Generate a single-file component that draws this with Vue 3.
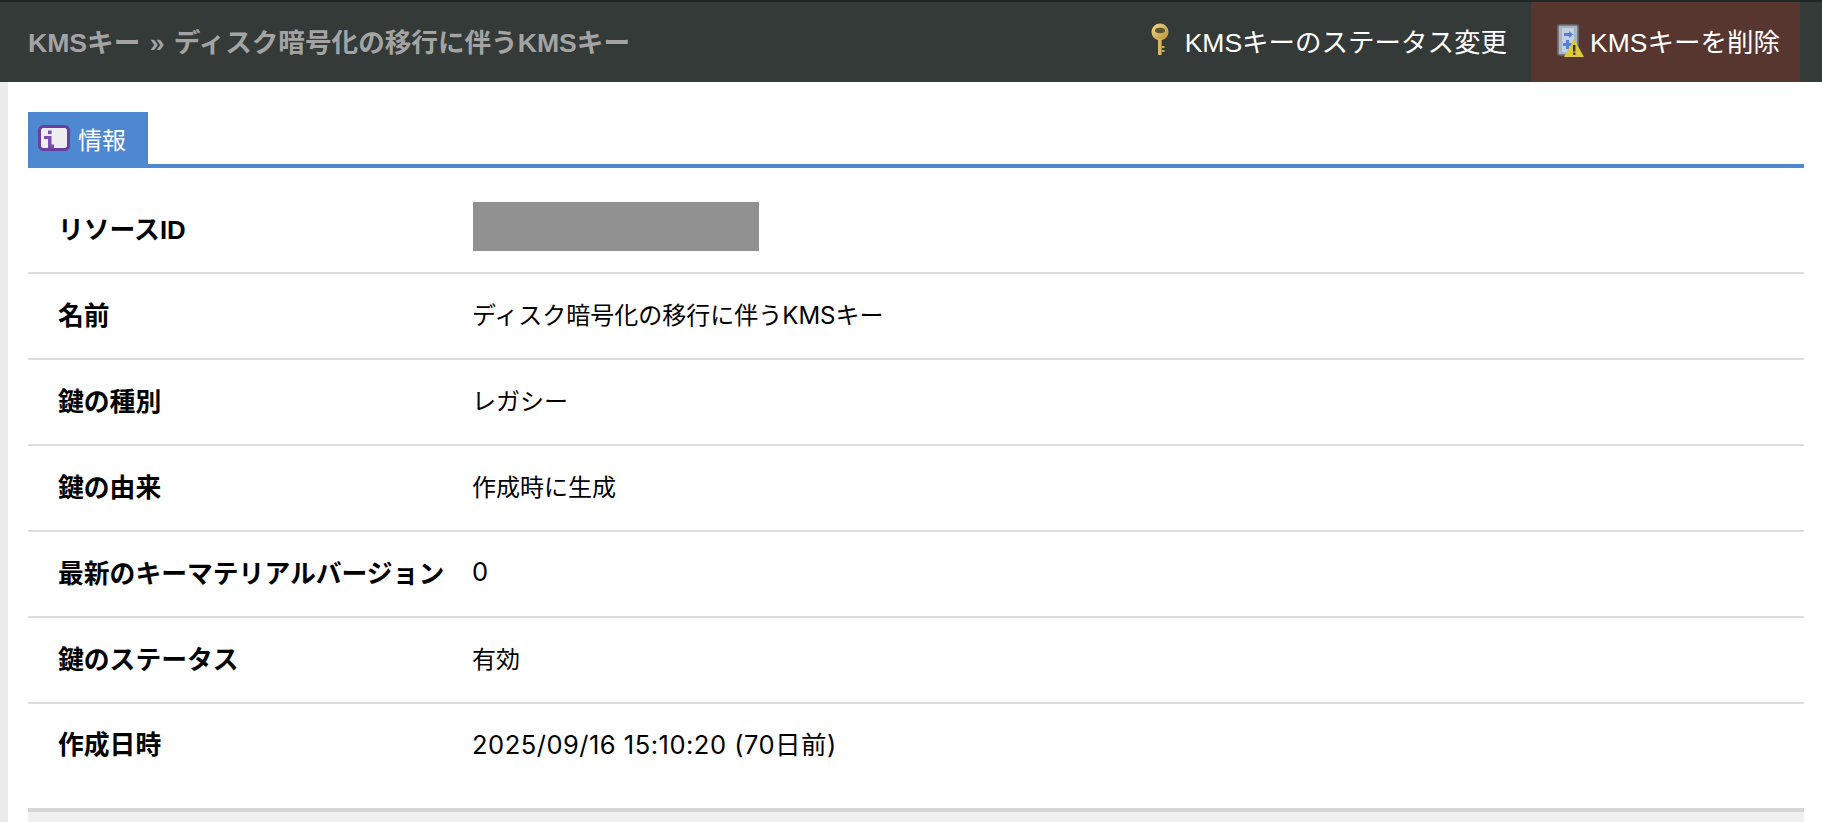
<script setup>
const rows = [
  { label: '名前', value: 'ディスク暗号化の移行に伴うKMSキー' },
  { label: '鍵の種別', value: 'レガシー' },
  { label: '鍵の由来', value: '作成時に生成' },
  { label: '最新のキーマテリアルバージョン', value: '0', wide: true },
  { label: '鍵のステータス', value: '有効' },
  { label: '作成日時', value: '2025/09/16 15:10:20 (70日前)', wide: true },
]
</script>

<template>
  <div class="page">
    <header class="topbar">
      <h1 class="title">KMSキー » ディスク暗号化の移行に伴うKMSキー</h1>
      <nav class="actions">
        <a class="action">
          <svg width="24" height="36" viewBox="0 0 24 36">
            <defs>
              <linearGradient id="gold" x1="0" y1="0" x2="1" y2="1">
                <stop offset="0" stop-color="#f0d98c" />
                <stop offset="1" stop-color="#b98f35" />
              </linearGradient>
            </defs>
            <filter id="soft"><feGaussianBlur stdDeviation="0.7" /></filter>
            <g filter="url(#soft)">
              <ellipse cx="12" cy="10" rx="8.5" ry="8.5" fill="url(#gold)" />
              <ellipse cx="12" cy="8.5" rx="5" ry="2.8" fill="#5c5632" />
              <rect x="10" y="17" width="3.6" height="16" fill="#d6b765" />
              <rect x="13.6" y="24" width="3" height="2" fill="#c9a64e" />
              <rect x="13.6" y="28" width="3" height="2" fill="#c9a64e" />
            </g>
          </svg>
          <span>KMSキーのステータス変更</span>
        </a>
        <a class="action danger">
          <svg width="28" height="36" viewBox="0 0 28 36">
            <filter id="soft2"><feGaussianBlur stdDeviation="0.6" /></filter>
            <g filter="url(#soft2)">
              <rect x="2" y="3" width="20" height="30" rx="1.5" fill="#a9b3c6" stroke="#6a6c72" stroke-width="1.5" />
              <rect x="6" y="6" width="12" height="24" fill="#c4cfe2" />
              <path d="M8 11h5v-2l4 3.5-4 3.5v-2H8z" fill="#4f7fe0" />
              <path d="M7 21h3v-3h3v3h3v3h-3v3h-3v-3H7z" fill="#4f7fe0" />
              <path d="M18 17L28 35H8z" fill="#dcc93c" />
              <rect x="17" y="23" width="2.4" height="6.5" fill="#3a3420" />
              <rect x="17" y="30.5" width="2.4" height="2.4" fill="#3a3420" />
            </g>
          </svg>
          <span>KMSキーを削除</span>
        </a>
      </nav>
    </header>

    <main class="content">
      <div class="tabs">
        <div class="tab">
          <svg width="32" height="26" viewBox="0 0 32 26">
            <filter id="soft3"><feGaussianBlur stdDeviation="0.7" /></filter>
            <g filter="url(#soft3)">
              <rect x="1.5" y="1.5" width="29" height="23" rx="4" fill="#eeeef0" stroke="#6a3f9e" stroke-width="3" />
              <rect x="10" y="5.5" width="3.6" height="3.6" fill="#7a4fb0" />
              <path d="M6 11h7.5v8.5H16V23H10V14H6z" fill="#7a4fb0" />
            </g>
          </svg>
          <span>情報</span>
        </div>
      </div>

      <section class="details">
        <div class="row first">
          <div class="label">リソースID</div>
          <div class="value"><div class="redacted"></div></div>
        </div>
        <div v-for="row in rows" :key="row.label" class="row">
          <div class="label">{{ row.label }}</div>
          <div class="value" :class="{ wide: row.wide }">{{ row.value }}</div>
        </div>
      </section>

      <div class="footer"></div>
    </main>
  </div>
</template>

<style>
html, body { margin: 0; background: #fff; }
</style>

<style scoped>
.page {
  width: 1822px;
  height: 822px;
  overflow: hidden;
  display: flex;
  flex-direction: column;
  font-family: "Liberation Sans", "Noto Sans CJK JP", sans-serif;
  color: #000;
  background: linear-gradient(90deg, #ebebeb 8px, #fff 8px);
}
.topbar {
  box-sizing: border-box;
  height: 82px;
  flex: none;
  border-top: 2px solid #1f2624;
  background: #333a38;
  display: flex;
  align-items: stretch;
  justify-content: space-between;
  padding: 0 22px 0 28px;
}
.title {
  margin: 0;
  align-self: center;
  padding-bottom: 4px;
  font-size: 26.6px;
  font-weight: 700;
  word-spacing: 2px;
  color: #a3a3a3;
}
.actions { display: flex; }
.action {
  display: flex;
  align-items: center;
  gap: 13px;
  color: #fff;
  font-size: 26.5px;
  padding: 0 24px 4px 0;
}
.action svg { flex: none; }
.danger {
  background: #573630;
  gap: 6px;
  padding: 0 20px 4px 25px;
}
.content {
  flex: 1;
  margin-left: 8px;
  padding: 30px 18px 0 20px;
  display: flex;
  flex-direction: column;
  background: #fff;
}
.tabs {
  border-bottom: 4px solid #4d88d0;
  height: 52px;
  flex: none;
}
.tab {
  width: 120px;
  height: 52px;
  box-sizing: border-box;
  background: #4d88d0;
  color: #fff;
  font-size: 24px;
  display: flex;
  align-items: center;
  gap: 8px;
  padding-left: 10px;
}
.details { flex: none; }
.row {
  box-sizing: border-box;
  height: 86px;
  display: flex;
  align-items: center;
  border-bottom: 2px solid #dcdcdc;
  padding-bottom: 6px;
}
.row.first {
  height: 106px;
  padding: 13px 0 0;
}
.row.first .label { margin-top: 2px; }
.row:last-child {
  height: 104px;
  border-bottom: none;
  padding-bottom: 28px;
}
.label {
  width: 444px;
  flex: none;
  box-sizing: border-box;
  padding-left: 30px;
  font-size: 25.8px;
  font-weight: 700;
}
.value {
  font-family: "Inter", "Noto Sans CJK JP", sans-serif;
  font-size: 24px;
}
.wide {
  font-size: 25.5px;
  letter-spacing: 0.5px;
}
.redacted {
  width: 286px;
  height: 49px;
  margin-left: 1px;
  background: #919191;
}
.footer {
  flex: 1;
  background: #f0f0f0;
  border-top: 4px solid #d6d6d6;
}
</style>
